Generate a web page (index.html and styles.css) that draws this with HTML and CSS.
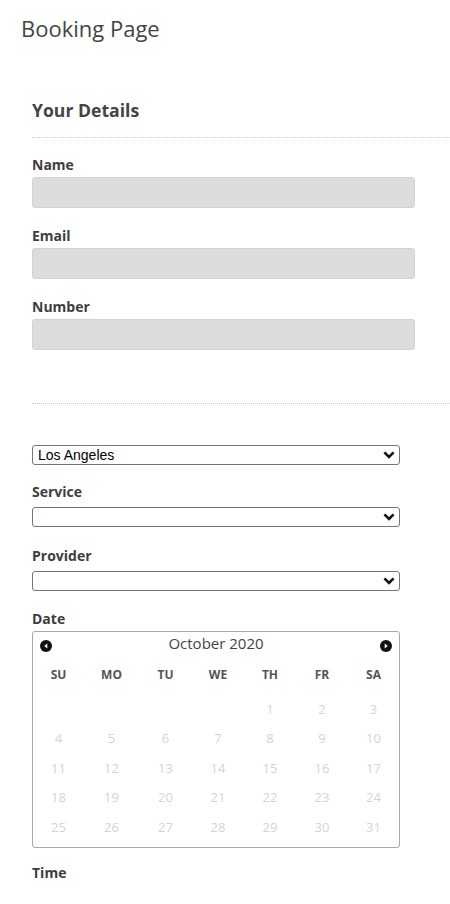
FILE: index.html
```html
<!DOCTYPE html>
<html lang="en">
<head>
<meta charset="utf-8">
<title>Booking Page</title>
<link rel="stylesheet" href="styles.css">
</head>
<body>
<h1 class="page-title">Booking Page</h1>
<main class="booking">
  <h2 class="section-title">Your Details</h2>
  <hr class="divider">
  <div class="field">
    <label class="label">Name</label>
    <div class="text-input"></div>
  </div>
  <div class="field">
    <label class="label">Email</label>
    <div class="text-input"></div>
  </div>
  <div class="field">
    <label class="label">Number</label>
    <div class="text-input"></div>
  </div>
  <hr class="divider divider-second">
  <div class="select select-location">
    <span class="select-value">Los Angeles</span>
    <svg class="chevron" width="12" height="8" viewBox="0 0 12 8"><path d="M1.4 1.4 L6 6 L10.6 1.4" fill="none" stroke="#111" stroke-width="2.6"/></svg>
  </div>
  <div class="select-field">
    <label class="label">Service</label>
    <div class="select">
      <span class="select-value"></span>
      <svg class="chevron" width="12" height="8" viewBox="0 0 12 8"><path d="M1.4 1.4 L6 6 L10.6 1.4" fill="none" stroke="#111" stroke-width="2.6"/></svg>
    </div>
  </div>
  <div class="select-field">
    <label class="label">Provider</label>
    <div class="select">
      <span class="select-value"></span>
      <svg class="chevron" width="12" height="8" viewBox="0 0 12 8"><path d="M1.4 1.4 L6 6 L10.6 1.4" fill="none" stroke="#111" stroke-width="2.6"/></svg>
    </div>
  </div>
  <div class="date-field">
    <label class="label label-date">Date</label>
    <div class="calendar">
      <div class="cal-header">
        <svg class="cal-nav" width="12" height="12" viewBox="0 0 12 12"><circle cx="6" cy="6" r="6" fill="#111"/><path d="M7.3 3.6 L4.2 6 L7.3 8.4 Z" fill="#fff"/></svg>
        <span class="cal-title">October 2020</span>
        <svg class="cal-nav" width="12" height="12" viewBox="0 0 12 12"><circle cx="6" cy="6" r="6" fill="#111"/><path d="M4.7 3.6 L7.8 6 L4.7 8.4 Z" fill="#fff"/></svg>
      </div>
      <div class="cal-weekdays">
        <span>SU</span><span>MO</span><span>TU</span><span>WE</span><span>TH</span><span>FR</span><span>SA</span>
      </div>
      <div class="cal-days">
        <span></span><span></span><span></span><span></span><span>1</span><span>2</span><span>3</span>
        <span>4</span><span>5</span><span>6</span><span>7</span><span>8</span><span>9</span><span>10</span>
        <span>11</span><span>12</span><span>13</span><span>14</span><span>15</span><span>16</span><span>17</span>
        <span>18</span><span>19</span><span>20</span><span>21</span><span>22</span><span>23</span><span>24</span>
        <span>25</span><span>26</span><span>27</span><span>28</span><span>29</span><span>30</span><span>31</span>
      </div>
    </div>
  </div>
  <label class="label label-time">Time</label>
</main>
</body>
</html>
```

FILE: styles.css
```css
* { box-sizing: border-box; }

html, body {
  margin: 0;
  padding: 0;
  background: #fff;
}

body {
  font-family: "Open Sans", "Noto Sans", sans-serif;
  color: #444;
  width: 450px;
  overflow: hidden;
}

.page-title {
  margin: 0;
  padding: 12.5px 0 0 21px;
  font-size: 22px;
  line-height: 30px;
  font-weight: 400;
  color: #444;
}

.booking {
  padding-left: 32px;
  padding-top: 55.5px;
}

.section-title {
  margin: 0;
  font-size: 17.6px;
  line-height: 24px;
  font-weight: 700;
  color: #444;
}

.divider {
  margin: 15px 0 0 0;
  border: 0;
  border-top: 1px dotted #c8c8c8;
  height: 0;
}

.field {
  margin-bottom: 18px;
}

.divider + .field {
  margin-top: 17px;
}

.label {
  display: block;
  font-size: 14px;
  line-height: 20px;
  font-weight: 700;
  color: #3d3d3d;
  margin-bottom: 2px;
}

.text-input {
  width: 383px;
  height: 31px;
  background: #dcdcdc;
  border: 1px solid #d2d2d2;
  border-radius: 3px;
}

.divider-second {
  margin-top: 53px;
}

.select {
  width: 368px;
  height: 20px;
  border: 1px solid #767676;
  border-radius: 3px;
  background: #fff;
  display: flex;
  align-items: center;
  justify-content: space-between;
  padding: 0 4px 0 5px;
  font-family: "Liberation Sans", Arial, sans-serif;
  font-size: 14px;
  color: #000;
}

.select-location {
  margin-top: 41px;
}

.select-value {
  line-height: 18px;
}

.chevron {
  display: block;
}

.select-field {
  margin-top: 17px;
}

.select-field + .select-field {
  margin-top: 19px;
}

.select-field .label {
  margin-bottom: 5px;
}

.date-field {
  margin-top: 17.5px;
}

.label-date {
  margin-bottom: 2.5px;
}

.calendar {
  width: 368px;
  border: 1px solid #a8a8a8;
  border-radius: 3px;
  padding-bottom: 5px;
}

.cal-header {
  display: flex;
  justify-content: space-between;
  align-items: flex-start;
  padding: 0 7px 0 7px;
  height: 28px;
}

.cal-title {
  font-size: 15px;
  line-height: 22px;
  color: #444;
}

.cal-nav {
  margin-top: 8px;
  display: block;
}

.cal-weekdays,
.cal-days {
  display: grid;
  grid-template-columns: 51px 55px 53px 52px 52px 52px 51px;
  text-align: center;
}

.cal-weekdays {
  font-size: 12px;
  line-height: 30px;
  font-weight: 700;
  color: #555;
  margin-bottom: 5px;
}

.cal-days {
  grid-auto-rows: 29.4px;
  font-size: 13px;
  line-height: 29.4px;
  color: #d4d4d4;
}

.label-time {
  margin-top: 15.5px;
}
```
